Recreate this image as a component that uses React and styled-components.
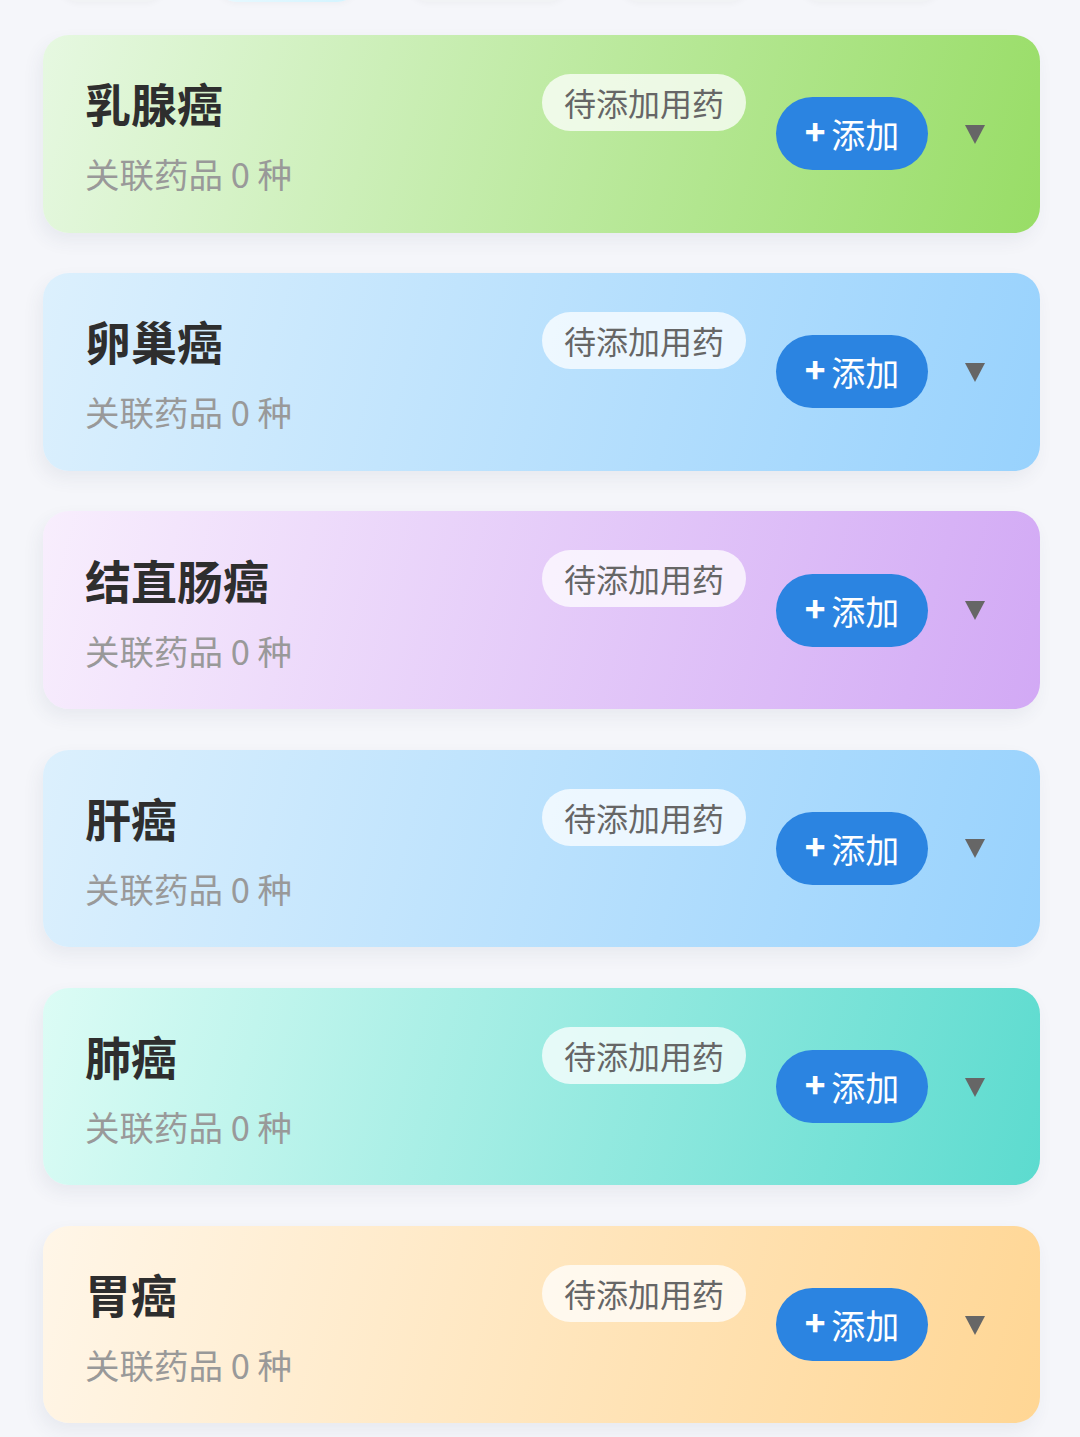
import styled, { createGlobalStyle } from 'styled-components';

const diseases = [
  { id: 1, name: '乳腺癌', from: '#e6f8e1', to: '#98dd66' },
  { id: 2, name: '卵巢癌', from: '#dcf0fd', to: '#98d2fd' },
  { id: 3, name: '结直肠癌', from: '#f8eefd', to: '#d2a9f5' },
  { id: 4, name: '肝癌', from: '#dcf0fd', to: '#98d2fd' },
  { id: 5, name: '肺癌', from: '#dcfcf5', to: '#5cdbcf' },
  { id: 6, name: '胃癌', from: '#fff6e8', to: '#ffd694' },
];

const tabs = [
  { id: 1, width: 110 },
  { id: 2, width: 144, active: true },
  { id: 3, width: 163 },
  { id: 4, width: 133 },
  { id: 5, width: 143 },
];

const GlobalStyle = createGlobalStyle`
  html, body {
    margin: 0;
    padding: 0;
    background: #f5f6fa;
  }
  body {
    font-family: "Noto Sans CJK SC", "Noto Sans", sans-serif;
  }
`;

const App = () => {
  return (
    <>
      <GlobalStyle />
      <Page>
        <TabStrip>
          {tabs.map((t) => (
            <Tab key={t.id} $active={t.active} style={{ width: t.width }} />
          ))}
        </TabStrip>
        <List>
          {diseases.map((d) => (
            <Card key={d.id} $from={d.from} $to={d.to}>
              <Info>
                <Title>{d.name}</Title>
                <Sub>关联药品 0 种</Sub>
              </Info>
              <Actions>
                <Badge>待添加用药</Badge>
                <AddButton>
                  <Plus>+</Plus>添加
                </AddButton>
                <Toggle viewBox="0 0 22 22">
                  <path d="M1 2 L21 2 L11 21 Z" fill="#666" />
                </Toggle>
              </Actions>
            </Card>
          ))}
        </List>
      </Page>
    </>
  );
};
export default App;

const Page = styled.div`
  min-height: 1437px;
  overflow: hidden;
  background: #f5f6fa;
`;

const TabStrip = styled.div`
  display: flex;
  gap: 48px;
  padding: 0 0 0 57px;
  height: 44px;
  margin-top: -42px;
`;

const Tab = styled.div`
  height: 44px;
  border-radius: 22px;
  background: ${(p) => (p.$active ? 'linear-gradient(90deg, #e8f9ff, #d2f4ff)' : '#f1f3f5')};
  box-shadow: 0 2px 6px rgba(0, 0, 0, 0.03);
`;

const List = styled.div`
  display: flex;
  flex-direction: column;
  gap: 40.7px;
  padding: 33px 40px 20px 43px;
`;

const Card = styled.div`
  height: 197.5px;
  box-sizing: border-box;
  border-radius: 26px;
  padding: 0 54px 0 42px;
  display: flex;
  align-items: center;
  justify-content: space-between;
  background: linear-gradient(105deg, ${(p) => p.$from} 0%, ${(p) => p.$to} 100%);
  box-shadow: -4px 8px 18px rgba(60, 70, 100, 0.07);
`;

const Info = styled.div`
  display: flex;
  flex-direction: column;
  gap: 19px;
`;

const Title = styled.div`
  font-size: 46px;
  line-height: 60px;
  font-weight: 700;
  color: #2e2e2e;
`;

const Sub = styled.div`
  font-size: 34.5px;
  line-height: 44px;
  color: #999;
`;

const Actions = styled.div`
  display: flex;
  align-items: center;
  height: 100%;
`;

const Badge = styled.div`
  align-self: flex-start;
  margin-top: 39px;
  height: 57px;
  padding: 0 22px;
  border-radius: 29px;
  background: rgba(255, 255, 255, 0.75);
  color: #666;
  font-size: 32px;
  line-height: 57px;
`;

const AddButton = styled.button`
  margin-left: 30px;
  width: 152px;
  height: 73px;
  border: none;
  border-radius: 37px;
  background: #2b84e1;
  color: #fff;
  font-family: "Noto Sans CJK SC", sans-serif;
  font-size: 34px;
  display: flex;
  align-items: center;
  justify-content: center;
  padding: 0;
  cursor: pointer;
`;

const Plus = styled.span`
  font-weight: 900;
  font-size: 34px;
  margin-right: 6px;
  position: relative;
  top: -3px;
`;

const Toggle = styled.svg`
  width: 22px;
  height: 22px;
  margin-left: 36px;
`;
